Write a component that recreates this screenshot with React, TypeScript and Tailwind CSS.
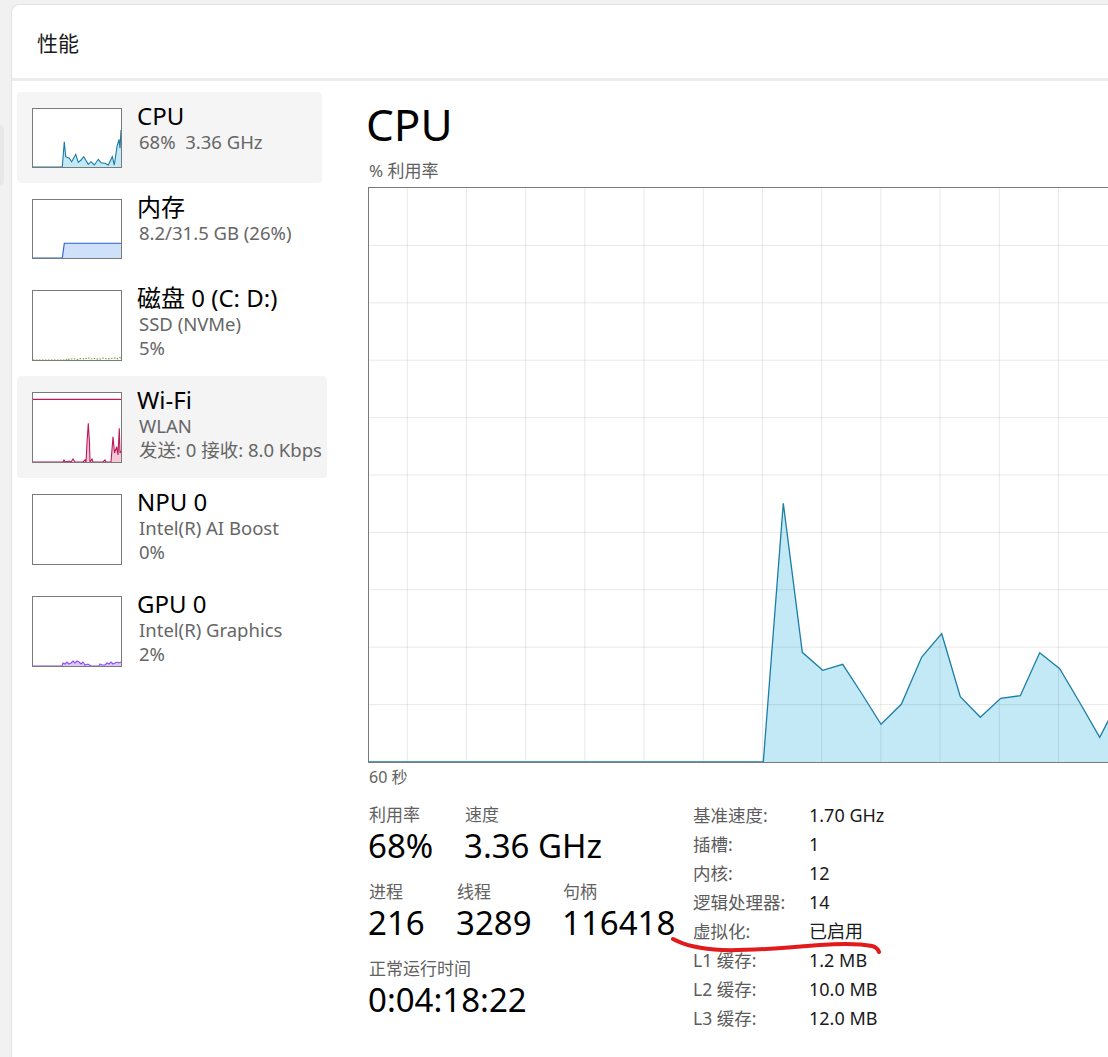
import React from 'react';

const FONT = "font-['Noto_Sans','Noto_Sans_CJK_SC',sans-serif]";

type Thumb = { stroke: string; fill: string; points: string; dash?: string; extra?: React.ReactNode };

const cpuPts = '0,58 29.3,58 31.3,32.7 32.7,47.7 36.3,49.3 38.7,52.7 42.7,45.3 45.3,53.3 48,51 50.7,47.7 53.3,52 55.3,55.3 58,52.7 61.3,56 65.3,50.3 68,53.7 72,54.3 75.3,56 79.3,47.7 81.3,56 84,37.7 86,30.3 87,39.3 88,21';
const memPts = '0,58 29.3,58 31.3,43.3 88,43.3';
const diskPts = '0,69 33,69 34,67.5 36,68.5 40,67.5 44,68.5 48,67.5 52,68 55,66.5 57,68 62,67.5 66,68.5 70,67 74,68 78,67.5 82,67 84,68 86,66.5 88,67';
const wifiPts = '0,69 30,69 31,67 32,69 36,68 38,69 40,66 42,69 50,69 52,67 53,69 54,50 55.3,30.3 56.5,50 57,69 59,66 60,69 62,69 70,69 72,67 73,69 78,69 80,43.7 81.5,60 83.7,53.7 85,62 86.3,35.3 87,60 88,58';
const gpuPts = '0,69 29,69 30,66 32,67 34,65 36,67 38,66 40,64 42,66 44,64 46,65 48,67 50,65 52,68 55,67 58,69 66,69 67,67 69,68 72,68 74,66 76,67 78,65 80,67 82,66 84,65 86,66 88,65';

const items = [
  { title: 'CPU', lines: ['68%\u00a0 3.36 GHz'], tall: false, bg: 'bg-[#f5f5f5] w-[305px]', thumb: { stroke: '#1a7aa3', fill: '#c3e9f7', points: cpuPts } },
  { title: '内存', lines: ['8.2/31.5 GB (26%)'], tall: false, bg: 'w-[305px]', thumb: { stroke: '#2a62c9', fill: '#cfe0fa', points: memPts } },
  { title: '磁盘 0 (C: D:)', lines: ['SSD (NVMe)', '5%'], tall: true, bg: 'w-[305px]', thumb: { stroke: '#6a9f3a', fill: '#ffffff', points: diskPts, dash: '1.5 1.5' } },
  { title: 'Wi-Fi', lines: ['WLAN', '发送: 0 接收: 8.0 Kbps'], tall: true, bg: 'bg-[#f4f4f4] w-[310px]', thumb: { stroke: '#bf175a', fill: '#f3c9d8', points: wifiPts, extra: <line x1="0" y1="6.3" x2="88" y2="6.3" stroke="#bf175a" strokeWidth="1.2" /> } },
  { title: 'NPU 0', lines: ['Intel(R) AI Boost', '0%'], tall: true, bg: 'w-[305px]', thumb: null },
  { title: 'GPU 0', lines: ['Intel(R) Graphics', '2%'], tall: true, bg: 'w-[305px]', thumb: { stroke: '#8f4cf0', fill: '#dcc8fb', points: gpuPts } },
];

function SideItem({ title, lines, tall, bg, thumb }: { title: string; lines: string[]; tall: boolean; bg: string; thumb: Thumb | null }) {
  const h = tall ? 69 : 58;
  return (
    <div className={`flex pl-[15px] pt-[16px] pb-[15px] rounded-[4px] ${bg}`}>
      <div className={`w-[90px] ${tall ? 'h-[71px]' : 'h-[60px]'} border border-[#7a7a7a] bg-white shrink-0`}>
        <svg className="block w-full h-full" viewBox={`0 0 88 ${h}`} preserveAspectRatio="none">
          {thumb && (
            <>
              <polygon points={`${thumb.points} 88,${h}`} fill={thumb.fill} />
              <polyline points={thumb.points} fill="none" stroke={thumb.stroke} strokeWidth="1.1" strokeDasharray={thumb.dash} />
              {thumb.extra}
            </>
          )}
        </svg>
      </div>
      <div className="ml-[15px] -mt-[7px] whitespace-nowrap">
        <div className="text-[24px] leading-[29px] text-black">{title}</div>
        {lines.map((l) => (
          <div key={l} className="text-[18.5px] leading-[24px] text-[#666666] pl-[2px]">{l}</div>
        ))}
      </div>
    </div>
  );
}

const chartData: [number, number][] = [
  [0, 574], [394.3, 574], [414.3, 315.3], [433.3, 464.3], [453.7, 482.3], [473.7, 476.3], [493, 506],
  [512, 536.3], [532.3, 516.3], [552.7, 469], [572.7, 445.7], [591.3, 508.7], [611.3, 529.3],
  [631.7, 510.3], [651.3, 507.7], [670.7, 464.7], [690.7, 480.7], [711, 515], [730.7, 549.3],
  [750, 512], [770, 500], [798, 520],
];

function CpuChart() {
  const pts = chartData.map(([x, y]) => `${x},${y}`).join(' ');
  const vx = Array.from({ length: 13 }, (_, k) => 38.3 + k * 59.2);
  const hy = Array.from({ length: 9 }, (_, k) => (k + 1) * 57.4);
  return (
    <div className="w-[800px] h-[576px] border border-[#7a7a7a] bg-white">
      <svg className="block" width="798" height="574" viewBox="0 0 798 574">
        <polygon points={`${pts} 798,574`} fill="#c3e9f7" />
        {vx.map((x) => (
          <line key={x} x1={x} y1="0" x2={x} y2="574" stroke="rgba(0,0,0,0.09)" strokeWidth="1" />
        ))}
        {hy.map((y) => (
          <line key={y} x1="0" y1={y} x2="798" y2={y} stroke="rgba(0,0,0,0.09)" strokeWidth="1" />
        ))}
        <polyline points={pts} fill="none" stroke="#1b7ea5" strokeWidth="1.3" />
      </svg>
    </div>
  );
}

function Stat({ label, value, w }: { label: string; value: string; w: string }) {
  return (
    <div className={w}>
      <div className="text-[17px] leading-[22px] text-[#616161] pl-[1px]">{label}</div>
      <div className="text-[33px] leading-[40px] text-black whitespace-nowrap">{value}</div>
    </div>
  );
}

const specs = [
  ['基准速度:', '1.70 GHz'],
  ['插槽:', '1'],
  ['内核:', '12'],
  ['逻辑处理器:', '14'],
  ['虚拟化:', '已启用'],
  ['L1 缓存:', '1.2 MB'],
  ['L2 缓存:', '10.0 MB'],
  ['L3 缓存:', '12.0 MB'],
];

export default function App() {
  return (
    <div className={`relative w-[1108px] h-[1057px] overflow-hidden bg-[#f1f1f1] ${FONT}`}>
      <div className="absolute left-0 top-[125px] w-[4px] h-[60px] rounded-r-[4px] bg-[#e7e7e7]" />

      <div className="ml-[11px] mt-[4px] w-[1130px] h-[1060px] bg-white border-l border-t border-[#e2e2e2] rounded-tl-[8px] flex flex-col">
        <div className="h-[73px] pl-[25px] pt-[26px] text-[21px] leading-[24px] text-[#1a1a1a]">性能</div>
        <div className="h-[3px] bg-[#ececec]" />

        <div className="flex pt-[11px]">
          <div className="w-[356px] pl-[5px] flex flex-col shrink-0">
            {items.map((it) => (
              <SideItem key={it.title} title={it.title} lines={it.lines} tall={it.tall} bg={it.bg} thumb={it.thumb} />
            ))}
          </div>

          <div className="flex flex-col pt-[6px]">
            <div className="text-[44px] leading-[52px] text-black -ml-[2px]">CPU</div>
            <div className="mt-[10px] text-[17px] leading-[22px] text-[#616161] pl-[1px]">% 利用率</div>
            <div className="mt-[5px]">
              <CpuChart />
            </div>
            <div className="mt-[4px] text-[16px] leading-[20px] text-[#616161] pl-[1px]">60 秒</div>

            <div className="mt-[14px] flex">
              <div className="w-[325px] pt-[3px] shrink-0">
                <div className="flex">
                  <Stat label="利用率" value="68%" w="w-[96px]" />
                  <Stat label="速度" value="3.36 GHz" w="w-[160px]" />
                </div>
                <div className="flex mt-[15px]">
                  <Stat label="进程" value="216" w="w-[88px]" />
                  <Stat label="线程" value="3289" w="w-[106px]" />
                  <Stat label="句柄" value="116418" w="w-[120px]" />
                </div>
                <div className="mt-[15px]">
                  <Stat label="正常运行时间" value="0:04:18:22" w="w-[200px]" />
                </div>
              </div>

              <div className="flex flex-col">
                {specs.map(([k, v]) => (
                  <div key={k} className="flex h-[29px] items-center">
                    <div className="w-[116px] text-[17.5px] text-[#5c5c5c]">{k}</div>
                    <div className="text-[18px] text-[#1a1a1a]">{v}</div>
                  </div>
                ))}
              </div>
            </div>
          </div>
        </div>
      </div>

      <svg className="absolute left-0 top-0 pointer-events-none" width="1108" height="1057">
        <path
          d="M673 939 C 684 945, 700 949, 722 950 C 750 951, 785 948, 820 945 C 840 943.5, 860 943.5, 872 946 C 876 947, 878 949, 879 952"
          fill="none"
          stroke="#e11b1b"
          strokeWidth="4"
          strokeLinecap="round"
        />
      </svg>
    </div>
  );
}
